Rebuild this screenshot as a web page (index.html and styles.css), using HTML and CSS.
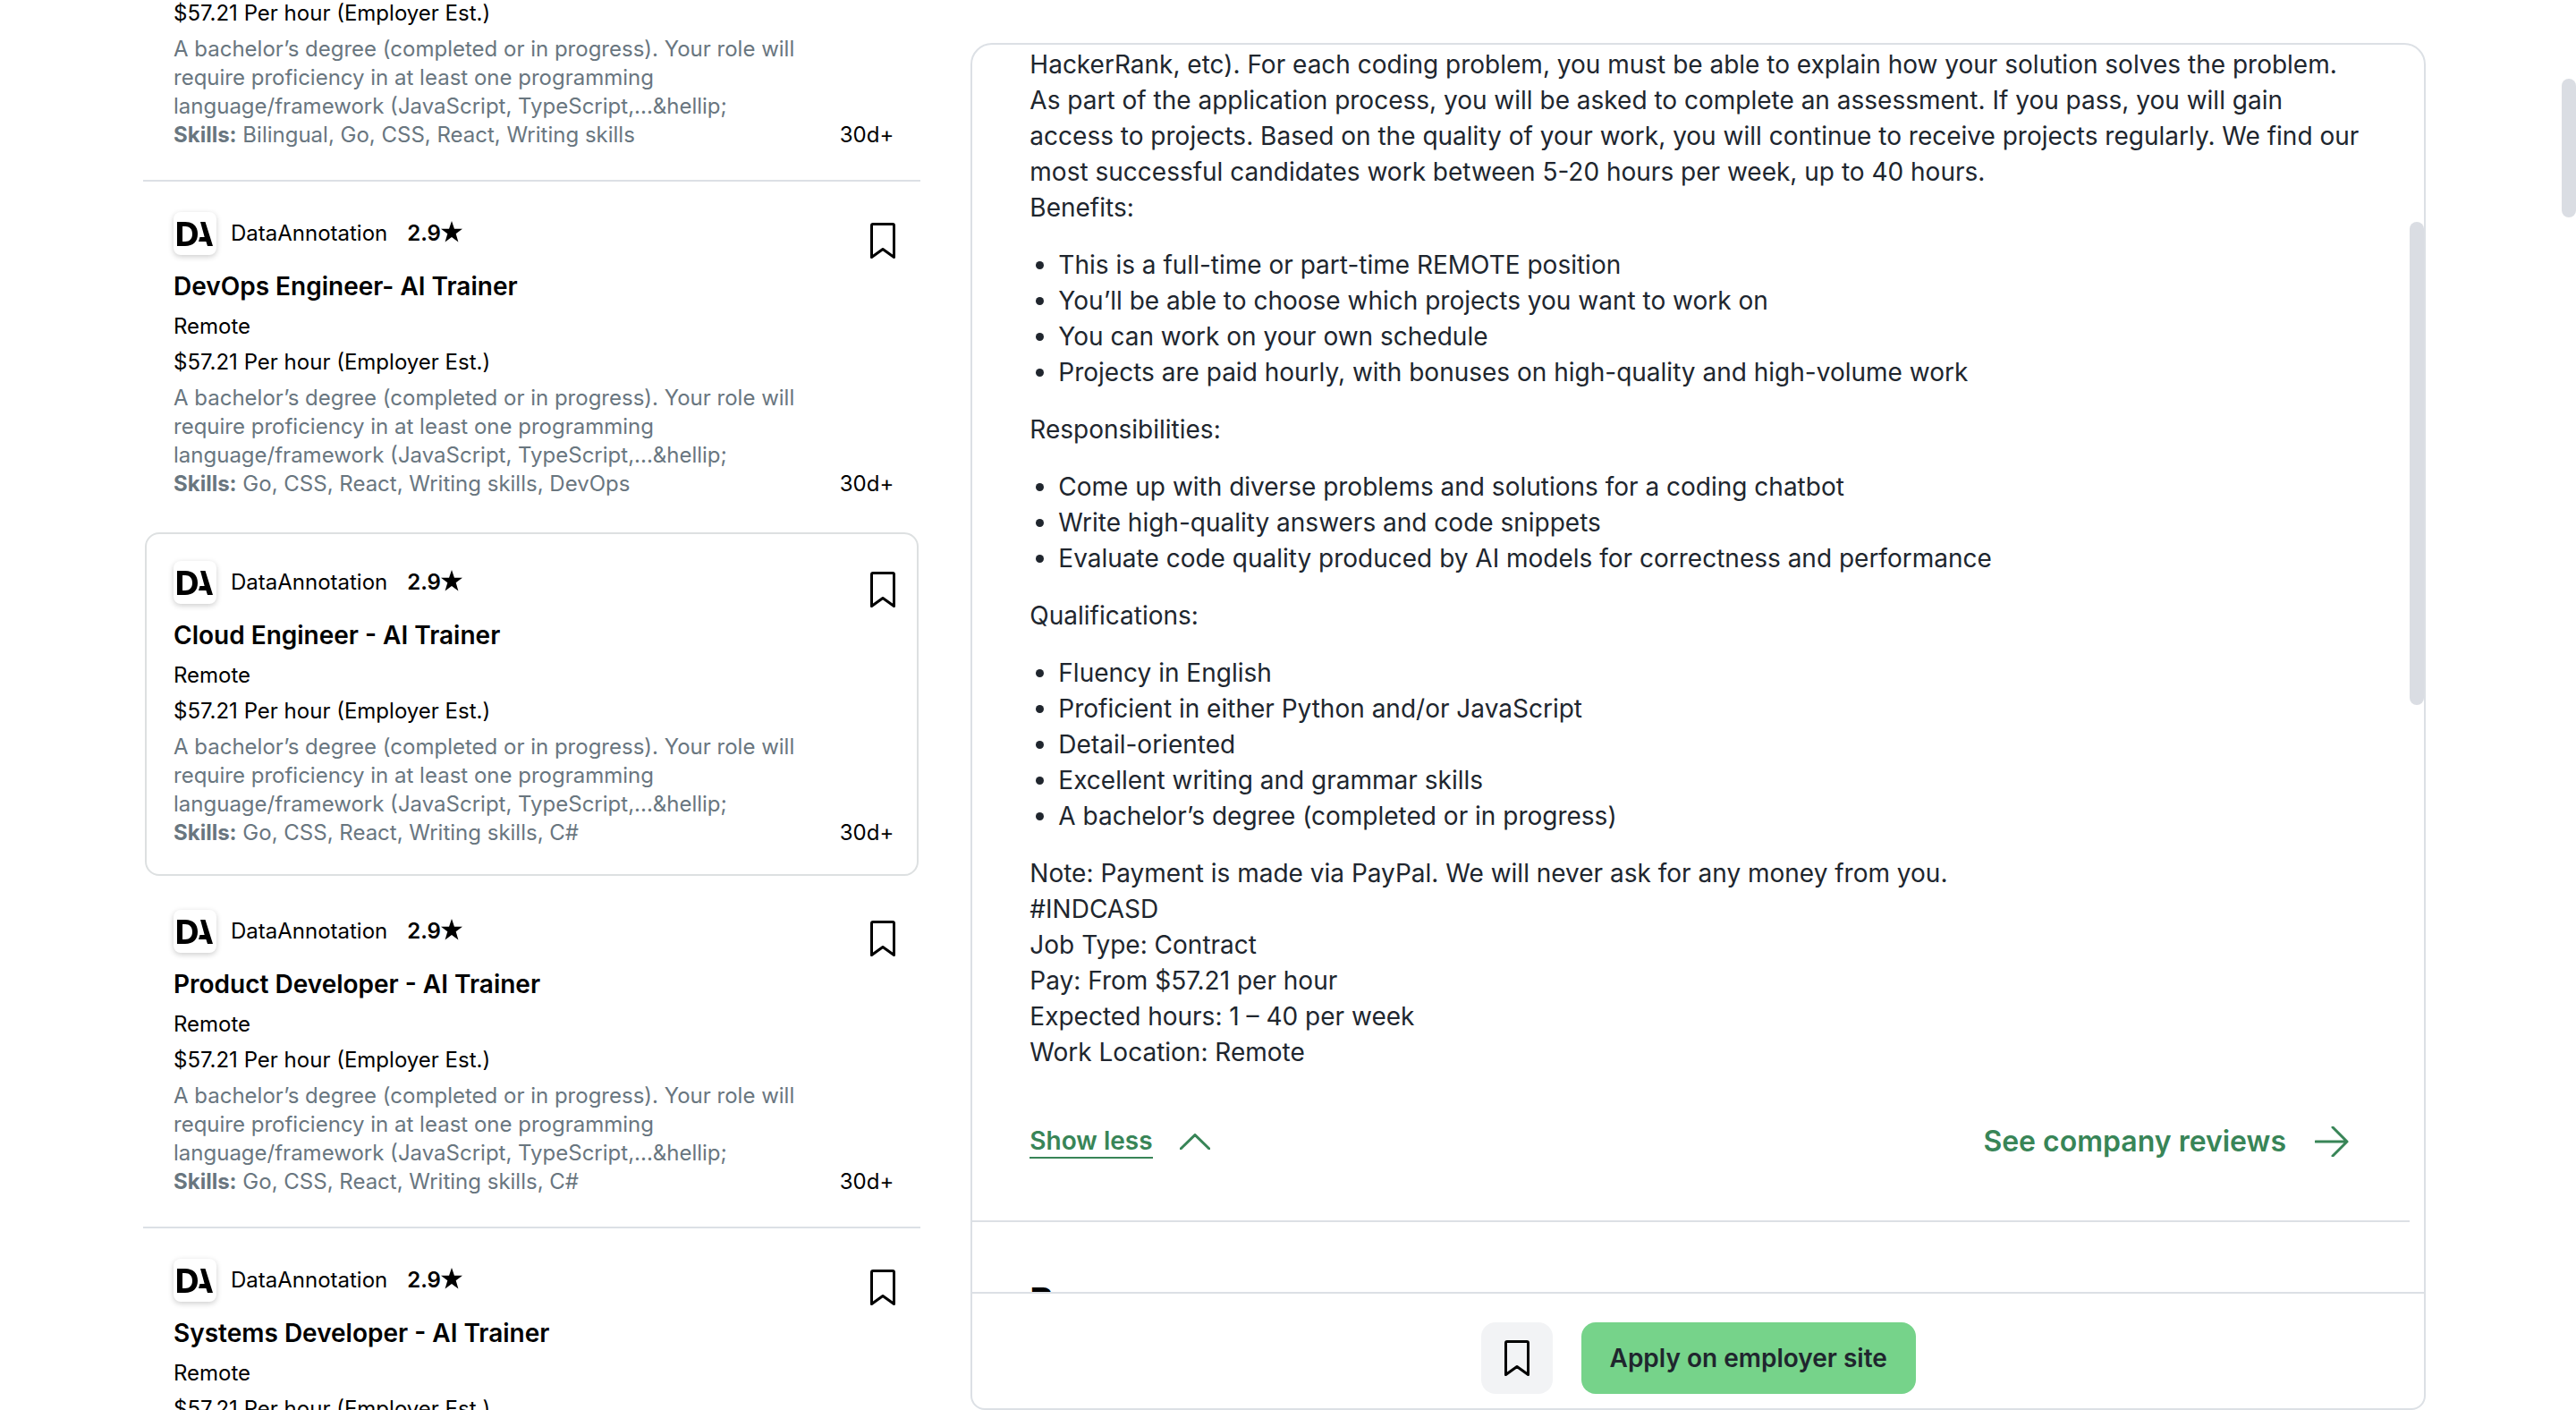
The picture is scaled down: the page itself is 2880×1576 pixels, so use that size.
FILE: index.html
```html
<!DOCTYPE html>
<html lang="en">
<head>
<meta charset="utf-8">
<title>Jobs</title>
<link rel="stylesheet" href="styles.css">
</head>
<body>
<svg class="sprite" aria-hidden="true">
  <symbol id="bookmark" viewBox="0 0 28 40"><path d="M1.5 38.5V3Q1.5 1.5 3 1.5H25Q26.5 1.5 26.5 3V38.5L14 29.5Z" fill="none" stroke="currentColor" stroke-width="3" stroke-linejoin="round"/></symbol>
  <symbol id="star" viewBox="0 0 22 22"><path d="M11 0L13.7 8H22L15.3 13L17.8 21.5L11 16.5L4.2 21.5L6.7 13L0 8H8.3Z" fill="currentColor"/></symbol>
  <symbol id="logo" viewBox="0 0 48 48"><path d="M4 11H13C22 11 27 16 27 24.5S22 38 13 38H4ZM10 16V33H13C18 33 21 30 21 24.5S18 16 13 16Z" fill="#000" fill-rule="evenodd"/><path d="M30 11H35.500L44 38H38L36.400 33H28L29.500 28H34.700Z" fill="#000"/></symbol>
</svg>
<div class="page">
  <main class="results">
    <article class="job job-partial">
      <p class="meta">$57.21 Per hour (Employer Est.)</p>
      <div class="summary">
        <p class="desc">A bachelor’s degree (completed or in progress). Your role will require proficiency in at least one programming language/framework (JavaScript, TypeScript,...&amp;hellip;<br><b>Skills:</b> Bilingual, Go, CSS, React, Writing skills</p>
        <span class="age">30d+</span>
      </div>
    </article>
    <article class="job">
      <div class="head">
        <span class="logo"><svg><use href="#logo"/></svg></span>
        <span class="company">DataAnnotation</span>
        <span class="rating">2.9<svg><use href="#star"/></svg></span>
        <button class="save" aria-label="Save job"><svg><use href="#bookmark"/></svg></button>
      </div>
      <h2><a href="#devops">DevOps Engineer- AI Trainer</a></h2>
      <p class="meta">Remote</p>
      <p class="meta">$57.21 Per hour (Employer Est.)</p>
      <div class="summary">
        <p class="desc">A bachelor’s degree (completed or in progress). Your role will require proficiency in at least one programming language/framework (JavaScript, TypeScript,...&amp;hellip;<br><b>Skills:</b> Go, CSS, React, Writing skills, DevOps</p>
        <span class="age">30d+</span>
      </div>
    </article>
    <article class="job job-selected">
      <div class="head">
        <span class="logo"><svg><use href="#logo"/></svg></span>
        <span class="company">DataAnnotation</span>
        <span class="rating">2.9<svg><use href="#star"/></svg></span>
        <button class="save" aria-label="Save job"><svg><use href="#bookmark"/></svg></button>
      </div>
      <h2><a href="#cloud">Cloud Engineer - AI Trainer</a></h2>
      <p class="meta">Remote</p>
      <p class="meta">$57.21 Per hour (Employer Est.)</p>
      <div class="summary">
        <p class="desc">A bachelor’s degree (completed or in progress). Your role will require proficiency in at least one programming language/framework (JavaScript, TypeScript,...&amp;hellip;<br><b>Skills:</b> Go, CSS, React, Writing skills, C#</p>
        <span class="age">30d+</span>
      </div>
    </article>
    <article class="job">
      <div class="head">
        <span class="logo"><svg><use href="#logo"/></svg></span>
        <span class="company">DataAnnotation</span>
        <span class="rating">2.9<svg><use href="#star"/></svg></span>
        <button class="save" aria-label="Save job"><svg><use href="#bookmark"/></svg></button>
      </div>
      <h2><a href="#product">Product Developer - AI Trainer</a></h2>
      <p class="meta">Remote</p>
      <p class="meta">$57.21 Per hour (Employer Est.)</p>
      <div class="summary">
        <p class="desc">A bachelor’s degree (completed or in progress). Your role will require proficiency in at least one programming language/framework (JavaScript, TypeScript,...&amp;hellip;<br><b>Skills:</b> Go, CSS, React, Writing skills, C#</p>
        <span class="age">30d+</span>
      </div>
    </article>
    <article class="job">
      <div class="head">
        <span class="logo"><svg><use href="#logo"/></svg></span>
        <span class="company">DataAnnotation</span>
        <span class="rating">2.9<svg><use href="#star"/></svg></span>
        <button class="save" aria-label="Save job"><svg><use href="#bookmark"/></svg></button>
      </div>
      <h2><a href="#systems">Systems Developer - AI Trainer</a></h2>
      <p class="meta">Remote</p>
      <p class="meta">$57.21 Per hour (Employer Est.)</p>
    </article>
  </main>
  <section class="detail">
    <div class="detail-body">
      <div class="posting">
        <p>HackerRank, etc). For each coding problem, you must be able to explain how your solution solves the problem.</p>
        <p>As part of the application process, you will be asked to complete an assessment. If you pass, you will gain access to projects. Based on the quality of your work, you will continue to receive projects regularly. We find our most successful candidates work between 5-20 hours per week, up to 40 hours.</p>
        <p>Benefits:</p>
        <ul>
          <li>This is a full-time or part-time REMOTE position</li>
          <li>You’ll be able to choose which projects you want to work on</li>
          <li>You can work on your own schedule</li>
          <li>Projects are paid hourly, with bonuses on high-quality and high-volume work</li>
        </ul>
        <p>Responsibilities:</p>
        <ul>
          <li>Come up with diverse problems and solutions for a coding chatbot</li>
          <li>Write high-quality answers and code snippets</li>
          <li>Evaluate code quality produced by AI models for correctness and performance</li>
        </ul>
        <p>Qualifications:</p>
        <ul>
          <li>Fluency in English</li>
          <li>Proficient in either Python and/or JavaScript</li>
          <li>Detail-oriented</li>
          <li>Excellent writing and grammar skills</li>
          <li>A bachelor’s degree (completed or in progress)</li>
        </ul>
        <p>Note: Payment is made via PayPal. We will never ask for any money from you.</p>
        <p>#INDCASD</p>
        <p>Job Type: Contract</p>
        <p>Pay: From $57.21 per hour</p>
        <p>Expected hours: 1 – 40 per week</p>
        <p>Work Location: Remote</p>
      </div>
      <div class="links">
        <button class="less"><span>Show less</span><svg viewBox="0 0 34 18"><path d="M1 17L17 1.500L33 17" fill="none" stroke="currentColor" stroke-width="3" stroke-linecap="round" stroke-linejoin="round"/></svg></button>
        <a class="reviews" href="#reviews">See company reviews<svg viewBox="0 0 38 34"><path d="M1 17H36M20 1L36 17L20 33" fill="none" stroke="currentColor" stroke-width="3" stroke-linecap="round" stroke-linejoin="round"/></svg></a>
      </div>
      <h2 class="pay-title">Base pay range</h2>
      <div class="thumb thumb-panel"></div>
    </div>
    <footer class="actions">
      <button class="save-large" aria-label="Save job"><svg><use href="#bookmark"/></svg></button>
      <button class="apply">Apply on employer site</button>
    </footer>
  </section>
</div>
<div class="thumb thumb-page"></div>
</body>
</html>
```
FILE: styles.css
```css
* { box-sizing: border-box; }
body {
  margin: 0;
  background: #fff;
  color: #000;
  font: 400 24px/32px Inter, "Liberation Sans", sans-serif;
  overflow: hidden;
}
h2, p, ul { margin: 0; padding: 0; }
a { color: inherit; text-decoration: none; }
button { border: 0; padding: 0; background: none; font: inherit; color: inherit; cursor: pointer; }
svg { display: block; }
.sprite { display: none; }

.page {
  display: grid;
  grid-template-columns: minmax(0, 869fr) minmax(0, 1626fr);
  gap: 56px;
  height: 100vh;
  padding: 0 168px 0 160px;
}

/* Result list */
.results { min-height: 0; overflow: hidden; }
.job {
  border-bottom: 2px solid #dce0e5;
  padding: 34px 30px 34px 34px;
}
.job-partial { margin-top: -5px; padding-top: 0; }
.job:has(+ .job-selected) { border-color: transparent; }
.job-selected {
  margin: 2px 2px 4px;
  border: 2px solid #dde0e1;
  border-radius: 16px;
  padding: 30px 26px 30px 30px;
}
.head { display: flex; align-items: center; }
.logo {
  width: 48px;
  height: 48px;
  border-radius: 8px;
  box-shadow: 0 2px 6px rgb(0 0 0 / 20%);
}
.logo svg { width: 48px; height: 48px; }
.company { margin: 0 22px 0 16px; }
.rating { display: flex; align-items: center; font-weight: 600; }
.rating svg { width: 24px; height: 24px; margin-bottom: 4px; }
.save { margin: 8px -2px 0 auto; height: 32px; }
.save svg { width: 28px; height: 40px; }
.job h2 { margin: 15px 0 5px; font-size: 28px; line-height: 40px; font-weight: 600; }
.meta { line-height: 40px; }
.summary { display: flex; align-items: flex-end; justify-content: space-between; margin-top: 4px; }
.desc { width: 710px; color: #69767f; }
.desc b { font-weight: 700; }

/* Posting panel */
.detail {
  display: flex;
  flex-direction: column;
  min-height: 0;
  margin-top: 48px;
  border: 2px solid #dce0e5;
  border-radius: 24px 24px 16px 16px;
}
.detail-body { position: relative; flex: 1; min-height: 0; padding-right: 16px; overflow: hidden; }
.posting { padding: 2px 48px 0 64px; color: #20262e; font-size: 28px; line-height: 40px; }
.posting ul { margin: 24px 0; padding-left: 32px; }
.links {
  display: flex;
  justify-content: space-between;
  align-items: center;
  height: 170px;
  padding: 0 68px 8px 64px;
  border-bottom: 2px solid #dce0e5;
  color: #388557;
  font-weight: 600;
}
.less { display: flex; align-items: center; gap: 30px; font-size: 28px; line-height: 36px; }
.less span { border-bottom: 2px solid; }
.less svg { width: 34px; height: 18px; }
.reviews { display: flex; align-items: center; gap: 32px; font-size: 32px; line-height: 40px; }
.reviews svg { width: 38px; height: 34px; }
.pay-title { padding: 64px 64px 0; font-size: 40px; line-height: 48px; }
.actions {
  display: flex;
  justify-content: center;
  gap: 32px;
  padding: 32px 0 16px;
  border-top: 2px solid #dce0e5;
}
.save-large { display: grid; place-items: center; width: 80px; height: 80px; border-radius: 16px; background: #f2f3f5; }
.save-large svg { width: 28px; height: 40px; }
.apply { height: 80px; padding: 0 32px; border-radius: 16px; background: #76d38a; color: #20262e; font-size: 28px; font-weight: 600; }

/* Scroll thumbs float over the content they belong to */
.thumb { position: absolute; border-radius: 8px; background: #dadde3; }
.thumb-panel { top: 198px; right: 0; width: 16px; height: 540px; }
.thumb-page { top: 88px; right: 0; width: 16px; height: 155px; }
```
